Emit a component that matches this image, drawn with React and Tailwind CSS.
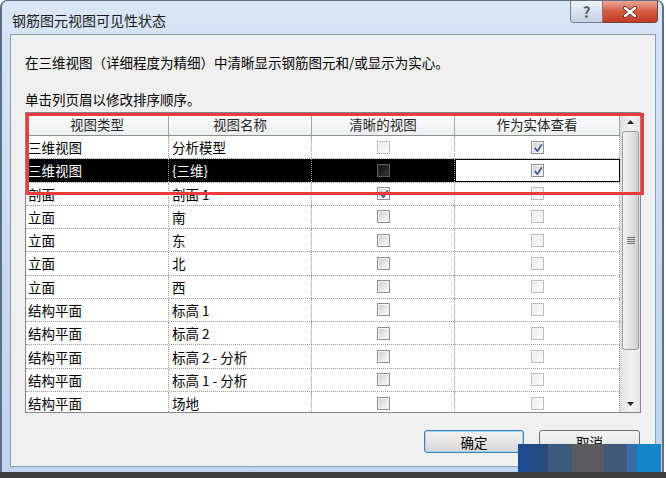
import React from "react";

const FONT = "font-['Noto_Sans_CJK_SC','Noto_Sans',sans-serif]";

const rows = [
  { type: "三维视图", name: "分析模型", clear: { checked: false, variant: "light" }, solid: { checked: true, variant: "normal" } },
  { type: "三维视图", name: "{三维}", selected: true, clear: { checked: false, variant: "dark" }, solid: { checked: true, variant: "normal" } },
  { type: "剖面", name: "剖面 1", clear: { checked: true, variant: "normal" }, solid: { checked: false, variant: "light" } },
  { type: "立面", name: "南" },
  { type: "立面", name: "东" },
  { type: "立面", name: "北" },
  { type: "立面", name: "西" },
  { type: "结构平面", name: "标高 1" },
  { type: "结构平面", name: "标高 2" },
  { type: "结构平面", name: "标高 2 - 分析" },
  { type: "结构平面", name: "标高 1 - 分析" },
  { type: "结构平面", name: "场地" },
];

function CheckBox({ checked = false, variant = "normal" }) {
  const outer =
    variant === "dark"
      ? "border-[#5a5a5a] bg-[#2a2a2a]"
      : variant === "light"
      ? "border-[#bdbdbd] bg-[#f6f6f6]"
      : "border-[#8f8f8f] bg-[#f4f4f4]";
  const inner =
    variant === "dark"
      ? "from-[#0c0c0c] to-[#3a3a3a]"
      : variant === "light"
      ? "from-[#ececec] to-[#fafafa]"
      : "from-[#d2d2d2] to-[#f7f7f7]";
  return (
    <div className={`relative w-[13px] h-[13px] border ${outer} p-[1px]`}>
      <div className={`w-full h-full bg-linear-to-br ${inner}`} />
      {checked && (
        <svg className="absolute left-0 top-0" width="13" height="13" viewBox="0 0 13 13">
          <path d="M3.2 6.4 L5.4 9.2 L9.6 2.8" fill="none" stroke="#3d5f9e" strokeWidth="1.7" strokeLinecap="round" strokeLinejoin="round" />
        </svg>
      )}
    </div>
  );
}

function Arrow({ up }) {
  return (
    <svg width="7" height="4" viewBox="0 0 7 4">
      <path d={up ? "M0 4 L3.5 0 L7 4 Z" : "M0 0 L3.5 4 L7 0 Z"} fill="#222" />
    </svg>
  );
}

function Scrollbar() {
  return (
    <div className="w-[20px] h-full flex flex-col items-center bg-linear-to-r from-[#e3e3e3] via-[#f2f2f2] to-[#e6e6e6] border-l border-[#dcdcdc]">
      <div className="h-[18px] w-full flex items-center justify-center">
        <Arrow up />
      </div>
      <div className="w-[17px] h-[219px] rounded-[3px] border border-[#9a9a9a] bg-linear-to-r from-[#f4f4f4] via-[#e4e4e4] to-[#cfcfcf] flex flex-col items-center justify-center gap-[1px]">
        <div className="w-[8px] h-[1px] bg-[#6f6f6f]" />
        <div className="w-[8px] h-[1px] bg-[#6f6f6f]" />
        <div className="w-[8px] h-[1px] bg-[#6f6f6f]" />
        <div className="w-[8px] h-[1px] bg-[#6f6f6f]" />
      </div>
      <div className="flex-1 w-full flex items-end justify-center pb-[6px]">
        <Arrow />
      </div>
    </div>
  );
}

function Row({ row }) {
  const clear = row.clear || { checked: false, variant: "normal" };
  const solid = row.solid || { checked: false, variant: "light" };
  const sel = row.selected;
  const cell = `h-full flex items-center border-r border-dotted border-[#9c9c9c] ${sel ? "bg-black text-white" : "bg-white text-black"}`;
  return (
    <div className="grid grid-cols-[143px_143px_143px_165px] h-[23.27px] shrink-0 border-b border-dotted border-[#9c9c9c]">
      <div className={`${cell} pl-[2px]`}>{row.type}</div>
      <div className={`${cell} pl-[3px]`}>{row.name}</div>
      <div className={`${cell} justify-center`}>
        <CheckBox {...clear} />
      </div>
      <div className={`h-full flex items-center justify-center border-dotted border-[#9c9c9c] ${sel ? "bg-white border border-solid border-black" : "bg-white border-r"}`}>
        <CheckBox {...solid} />
      </div>
    </div>
  );
}

function Table() {
  const head = "h-full flex items-center justify-center border-r border-[#a4a4a4]";
  return (
    <div className="w-[616px] h-[301px] border border-[#828790] bg-white flex">
      <div className="flex-1 flex flex-col overflow-hidden">
        <div className="grid grid-cols-[143px_143px_143px_165px] h-[23px] shrink-0 bg-linear-to-b from-[#ffffff] to-[#eceef0] border-b border-[#8e8f8f] text-[#262626]">
          <div className={head}>视图类型</div>
          <div className={head}>视图名称</div>
          <div className={head}>清晰的视图</div>
          <div className={head}>作为实体查看</div>
        </div>
        {rows.map((r, i) => (
          <Row key={i} row={r} />
        ))}
      </div>
      <Scrollbar />
    </div>
  );
}

function Watermark() {
  return (
    <svg className="absolute left-[518px] top-[444px]" width="143" height="28" viewBox="0 0 143 28">
      <rect x="0" y="0" width="143" height="28" fill="#1e4b8d" />
      <rect x="14" y="0" width="16" height="28" fill="#254a7c" />
      <rect x="30" y="0" width="24" height="28" fill="#3c5a7c" />
      <rect x="54" y="0" width="32" height="28" fill="#5c5c5e" />
      <rect x="86" y="0" width="23" height="28" fill="#3f5a78" />
      <rect x="109" y="0" width="10" height="28" fill="#3a6aa8" />
      <rect x="119" y="0" width="24" height="28" fill="#1485c6" />
    </svg>
  );
}

export default function App() {
  return (
    <div className={`relative w-[666px] h-[478px] overflow-hidden bg-white flex flex-col ${FONT}`}>
      <div className="w-[664px] h-[472px] shrink-0 flex flex-col rounded-tl-[7px] rounded-tr-[7px] border-l-[2px] border-t border-r-[2px] border-[#5f6e82] bg-linear-to-b from-[#d8e6f6] via-[#c9dcf1] to-[#bfd4ee]">
        {/* title bar */}
        <div className="h-[33px] shrink-0 flex items-start">
          <div className="pl-[10px] pt-[9px] text-[14px] leading-[20px] text-[#1a1a1a]">钢筋图元视图可见性状态</div>
          <div className="ml-auto mr-[4px] flex">
            <div className="w-[33px] h-[22px] rounded-bl-[4px] border border-t-0 border-[#6d7d95] bg-linear-to-b from-[#eef3f9] to-[#c5d2e3] flex items-center justify-center text-[15px] font-bold text-[#4e5a6a] leading-none">
              ?
            </div>
            <div className="w-[55px] h-[22px] rounded-br-[4px] border border-l-0 border-t-0 border-[#7a3b30] bg-linear-to-b from-[#e8a595] via-[#d45a42] to-[#c43a22] flex items-center justify-center">
              <svg width="16" height="12" viewBox="0 0 16 12">
                <path d="M3 2 L13 10 M13 2 L3 10" stroke="#5a2a22" strokeWidth="4" strokeLinecap="round" />
                <path d="M3 2 L13 10 M13 2 L3 10" stroke="#ffffff" strokeWidth="2.4" strokeLinecap="round" />
              </svg>
            </div>
          </div>
        </div>

        {/* client area */}
        <div className="relative ml-[8px] mr-[6px] h-[433px] shrink-0 border border-[#8a9bb2] bg-[#f0f0f0] pl-[14px] pt-[18px] text-[13.5px] leading-[18px] text-black">
          <div>在三维视图（详细程度为精细）中清晰显示钢筋图元和/或显示为实心。</div>
          <div className="mt-[19px]">单击列页眉以修改排序顺序。</div>
          <div className="mt-[4px]">
            <Table />
          </div>
          <div className="w-[616px] mt-[17px] flex justify-end gap-[15px] pr-[1px]">
            <div className="w-[100px] h-[23px] rounded-[3px] border border-[#3c7fb1] shadow-[inset_0_0_0_1px_#9fd6f5] bg-linear-to-b from-[#f2f2f2] via-[#e7e7e7] to-[#d3d3d3] flex items-center justify-center">
              确定
            </div>
            <div className="w-[101px] h-[23px] rounded-[3px] border border-[#707070] bg-linear-to-b from-[#f2f2f2] via-[#ebebeb] to-[#d6d6d6] flex items-center justify-center">
              取消
            </div>
          </div>

          {/* annotation box */}
          <div className="absolute left-[15px] top-[78px] w-[618px] h-[82px] border-[3px] border-[#f2393b] pointer-events-none" />
        </div>
      </div>
      <div className="flex-1 bg-[#3c3c3c]" />
      <Watermark />
    </div>
  );
}
